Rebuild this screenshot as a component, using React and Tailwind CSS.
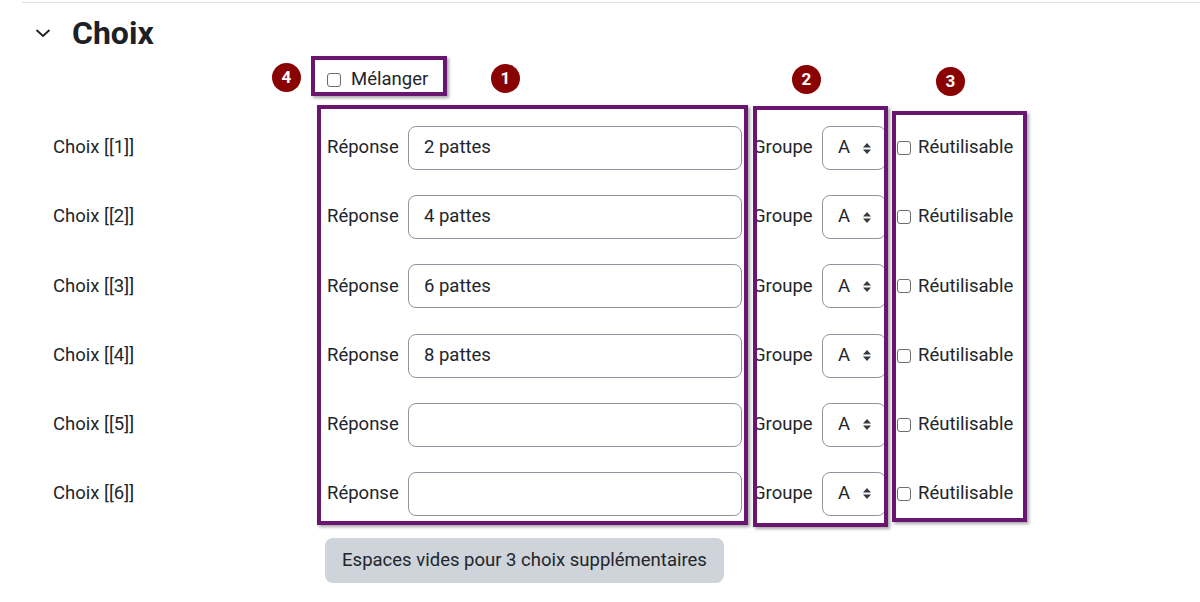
import React from 'react';

const rows = [
  { n: 1, value: '2 pattes' },
  { n: 2, value: '4 pattes' },
  { n: 3, value: '6 pattes' },
  { n: 4, value: '8 pattes' },
  { n: 5, value: '' },
  { n: 6, value: '' },
];

function Checkbox() {
  return <span className="block w-[14px] h-[14px] border border-[#6d6d6d] rounded-[3px] bg-white shrink-0" />;
}

function Caret() {
  return (
    <svg width="10" height="13" viewBox="0 0 10 13" className="shrink-0">
      <path d="M1 5.5 L5 1 L9 5.5 Z" fill="#343a40" />
      <path d="M1 7.5 L5 12 L9 7.5 Z" fill="#343a40" />
    </svg>
  );
}

function ChoiceRow({ n, value }) {
  return (
    <div className="flex items-center h-[44px] pl-[53px]">
      <div className="w-[274px]">Choix [[{n}]]</div>
      <div className="w-[81px]">Réponse</div>
      <div className="w-[334px] h-[44px] border border-[#8f959e] rounded-[8px] flex items-center pl-[15px]">
        {value}
      </div>
      <div className="w-[69px] ml-[11px]">Groupe</div>
      <div className="w-[64px] h-[44px] border border-[#8f959e] rounded-[8px] flex items-center justify-between pl-[15px] pr-[13px]">
        <span>A</span>
        <Caret />
      </div>
      <div className="ml-[11px] flex items-center gap-[7px]">
        <Checkbox />
        <span>Réutilisable</span>
      </div>
    </div>
  );
}

function Badge({ label, className }) {
  return (
    <div
      className={`absolute w-[29px] h-[29px] rounded-full bg-[#8a0303] text-white text-[17px] font-bold flex items-center justify-center ${className}`}
    >
      {label}
    </div>
  );
}

export default function App() {
  return (
    <div
      className="relative w-[1200px] h-[602px] overflow-hidden bg-white text-[18.5px] text-[#22262a]"
      style={{ fontFamily: 'Roboto, "Liberation Sans", sans-serif' }}
    >
      <div className="ml-[22px] mt-[2px] border-t border-[#dee2e6]" />

      {/* Section header */}
      <div className="h-[60px] flex items-center pl-[35px]">
        <svg width="16" height="10" viewBox="0 0 16 10">
          <path d="M1.5 2 L8 8 L14.5 2" fill="none" stroke="#1d2125" strokeWidth="1.8" />
        </svg>
        <h3 className="ml-[21px] text-[32px] font-bold leading-none text-[#1d2125]">Choix</h3>
      </div>

      {/* Shuffle */}
      <div className="h-[34px] flex items-center pl-[327px] gap-[10px]">
        <Checkbox />
        <span>Mélanger</span>
      </div>

      {/* Choices */}
      <div className="mt-[29px] flex flex-col gap-[25.2px]">
        {rows.map((r) => (
          <ChoiceRow key={r.n} n={r.n} value={r.value} />
        ))}
      </div>

      <div className="pl-[325px] mt-[22px]">
        <button className="h-[45px] w-[399px] rounded-[8px] bg-[#ced4da] text-[#22262a] text-[18.5px]">
          Espaces vides pour 3 choix supplémentaires
        </button>
      </div>

      {/* Annotation overlays */}
      <div className="absolute left-[311px] top-[56px] w-[136px] h-[40px] border-4 border-[#6a1670] shadow-[2px_2px_3px_rgba(0,0,0,0.35)]" />
      <div className="absolute left-[317px] top-[105px] w-[431px] h-[420px] border-4 border-[#6a1670] shadow-[2px_2px_3px_rgba(0,0,0,0.35)]" />
      <div className="absolute left-[753px] top-[106px] w-[135px] h-[421px] border-4 border-[#6a1670] shadow-[2px_2px_3px_rgba(0,0,0,0.35)]" />
      <div className="absolute left-[892px] top-[111px] w-[135px] h-[411px] border-4 border-[#6a1670] shadow-[2px_2px_3px_rgba(0,0,0,0.35)]" />

      <Badge label="4" className="left-[272px] top-[63px]" />
      <Badge label="1" className="left-[491px] top-[64px]" />
      <Badge label="2" className="left-[792px] top-[65px]" />
      <Badge label="3" className="left-[936px] top-[67px]" />
    </div>
  );
}
